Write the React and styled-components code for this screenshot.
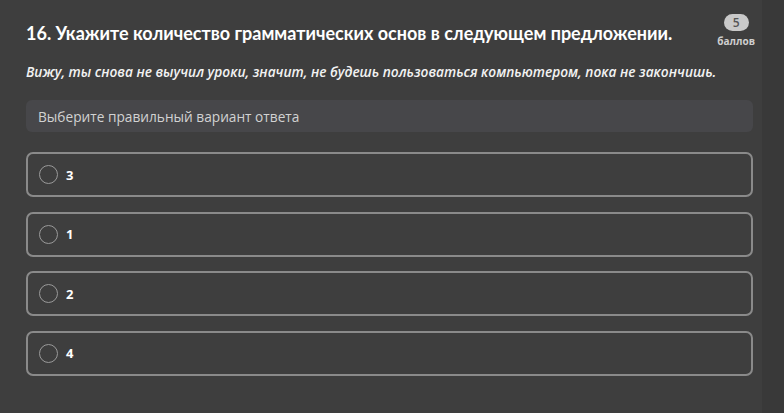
import React from "react";
import styled, { createGlobalStyle } from "styled-components";

const Global = createGlobalStyle`
  html, body { margin: 0; padding: 0; background: #393939; }
  body { font-family: "Open Sans", "Noto Sans", sans-serif; }
  * { box-sizing: border-box; }
`;

const Page = styled.div`
  width: 762px;
  height: 413px;
  background: #3e3e3e;
  padding: 17px 9px 0 26px;
  display: flex;
  flex-direction: column;
`;

const Header = styled.div`
  display: flex;
  justify-content: space-between;
  align-items: flex-start;
`;

const Title = styled.h1`
  margin: 5px 0 0 0;
  font-family: "Lato", "Open Sans", sans-serif;
  font-size: 18px;
  line-height: 22px;
  font-weight: 700;
  color: #ffffff;
`;

const Score = styled.div`
  display: flex;
  flex-direction: column;
  align-items: center;
  margin-top: -3px;
  margin-right: -2px;
`;

const Pill = styled.div`
  width: 25px;
  height: 17px;
  border-radius: 9px;
  background: #c9c9c9;
  color: #555;
  font-size: 12px;
  font-weight: 600;
  display: flex;
  align-items: center;
  justify-content: center;
`;

const ScoreLabel = styled.div`
  font-size: 10px;
  font-weight: 700;
  color: #cfcfcf;
  margin-top: 3px;
`;

const Sentence = styled.p`
  margin: 14px 0 0 0;
  font-size: 13.7px;
  line-height: 19px;
  font-style: italic;
  font-weight: 600;
  color: #f2f2f2;
`;

const Hint = styled.div`
  margin-top: 19px;
  height: 32px;
  border-radius: 6px;
  background: #47474a;
  color: #d2d2d2;
  font-size: 13.7px;
  display: flex;
  align-items: center;
  padding-left: 12px;
`;

const Options = styled.div`
  margin-top: 20px;
  display: flex;
  flex-direction: column;
  gap: 14.5px;
`;

const Option = styled.label`
  height: 45px;
  border: 2px solid #8a8a8a;
  border-radius: 7px;
  display: flex;
  align-items: center;
  padding-left: 11px;
  gap: 8px;
  cursor: pointer;
`;

const Radio = styled.span`
  width: 19px;
  height: 19px;
  border-radius: 50%;
  border: 1.5px solid #9a9a9a;
`;

const OptionText = styled.span`
  font-size: 13px;
  font-weight: 700;
  color: #ffffff;
`;

export default function App() {
  const options = ["3", "1", "2", "4"];
  return (
    <>
      <Global />
      <Page>
        <Header>
          <Title>16. Укажите количество грамматических основ в следующем предложении.</Title>
          <Score>
            <Pill>5</Pill>
            <ScoreLabel>баллов</ScoreLabel>
          </Score>
        </Header>
        <Sentence>
          Вижу, ты снова не выучил уроки, значит, не будешь пользоваться компьютером, пока не закончишь.
        </Sentence>
        <Hint>Выберите правильный вариант ответа</Hint>
        <Options>
          {options.map((o) => (
            <Option key={o}>
              <Radio />
              <OptionText>{o}</OptionText>
            </Option>
          ))}
        </Options>
      </Page>
    </>
  );
}
